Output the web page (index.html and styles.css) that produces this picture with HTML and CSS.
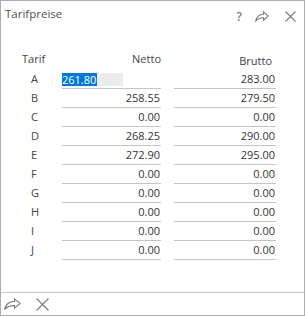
FILE: index.html
```html
<!DOCTYPE html>
<html lang="de">
<head>
  <meta charset="UTF-8">
  <title>Tarifpreise</title>
  <link rel="stylesheet" href="styles.css">
</head>
<body>
  <div class="dialog">
    <!-- Titelleiste -->
    <div class="titlebar">
      <span class="title">Tarifpreise</span>
      <div class="tools">
        <span class="help">?</span>
        <svg class="icon share" width="14" height="11" viewBox="0 0 14 11">
          <path d="M8.5 0.8 L13.2 5 L8.5 9.2 V6.8 C5.5 6.6 3 7.6 0.8 9.8 C1.6 5.6 4.2 3.4 8.5 3.2 Z" />
        </svg>
        <svg class="icon close" width="11" height="11" viewBox="0 0 11 11">
          <path d="M0.5 0.5 L10.5 10.5 M10.5 0.5 L0.5 10.5" />
        </svg>
      </div>
    </div>

    <!-- Tabelle -->
    <div class="content">
      <div class="grid" id="grid">
        <div class="head tarif">Tarif</div>
        <div class="head netto">Netto</div>
        <div></div>
        <div class="head brutto">Brutto</div>
      </div>
    </div>

    <!-- Fußleiste -->
    <div class="footer">
      <svg class="icon share" width="17" height="12" viewBox="0 0 17 12">
        <path d="M10.5 0.8 L16.2 5.5 L10.5 10.2 V7.6 C6.8 7.4 3.6 8.6 0.8 11.2 C1.8 6.2 5.2 3.6 10.5 3.4 Z" />
      </svg>
      <svg class="icon close" width="13" height="13" viewBox="0 0 13 13">
        <path d="M0.5 0.5 L12.5 12.5 M12.5 0.5 L0.5 12.5" />
      </svg>
    </div>
  </div>

  <script>
    // Tarifdaten
    const tarife = [
      { name: "A", netto: "261.80", brutto: "283.00", edit: true },
      { name: "B", netto: "258.55", brutto: "279.50" },
      { name: "C", netto: "0.00", brutto: "0.00" },
      { name: "D", netto: "268.25", brutto: "290.00" },
      { name: "E", netto: "272.90", brutto: "295.00" },
      { name: "F", netto: "0.00", brutto: "0.00" },
      { name: "G", netto: "0.00", brutto: "0.00" },
      { name: "H", netto: "0.00", brutto: "0.00" },
      { name: "I", netto: "0.00", brutto: "0.00" },
      { name: "J", netto: "0.00", brutto: "0.00" },
    ];

    const grid = document.getElementById("grid");

    tarife.forEach((t) => {
      const netto = t.edit
        ? `<div class="cell editing"><span class="edit-box"><span class="sel">${t.netto}</span></span></div>`
        : `<div class="cell">${t.netto}</div>`;
      grid.insertAdjacentHTML(
        "beforeend",
        `<div class="letter">${t.name}</div>${netto}<div></div><div class="cell">${t.brutto}</div>`
      );
    });
  </script>
</body>
</html>
```

FILE: styles.css
```css
html, body {
  margin: 0;
  padding: 0;
  background: #ffffff;
}

body {
  font-family: "Open Sans", "Noto Sans", sans-serif;
  font-size: 11px;
  color: #444;
}

.dialog {
  width: 305px;
  height: 316px;
  box-sizing: border-box;
  border: 1px solid #adadad;
  display: flex;
  flex-direction: column;
}

.titlebar {
  height: 29px;
  display: flex;
  align-items: flex-start;
  justify-content: space-between;
}

.title {
  font-size: 11.5px;
  line-height: 16px;
  padding: 5px 0 0 4px;
  color: #505050;
}

.tools {
  display: flex;
  align-items: center;
  padding: 10px 8px 0 0;
}

.help {
  font-size: 12px;
  font-weight: 600;
  line-height: 10px;
  color: #808080;
  margin-right: 13px;
}

.icon {
  display: block;
  fill: none;
  stroke: #7a7a7a;
  stroke-width: 1.1;
}

.tools .share {
  margin-right: 16px;
}

.content {
  flex: 1;
}

.grid {
  display: grid;
  grid-template-columns: 48px 99px 13px 102px;
  padding: 21px 0 0 13px;
}

.head {
  height: 19px;
  line-height: 16px;
}

.head.tarif {
  padding-left: 8px;
}

.head.netto {
  text-align: right;
}

.head.brutto {
  text-align: right;
  padding-right: 4px;
  line-height: 19px;
}

.letter {
  height: 19px;
  line-height: 17px;
  padding-left: 17px;
}

.cell {
  height: 18px;
  line-height: 17px;
  border-bottom: 1px solid #c4c4c4;
  text-align: right;
  padding-right: 1px;
  color: #333;
}

.cell.editing {
  text-align: left;
  padding: 0;
}

.edit-box {
  display: inline-block;
  width: 61px;
  height: 13px;
  margin-top: 3px;
  background: #ececec;
  line-height: 13px;
  vertical-align: top;
}

.sel {
  display: inline-block;
  background: #0078d7;
  color: #fff;
  padding: 0 1px 0 0;
}

.footer {
  height: 22px;
  border-top: 1px solid #c8c8c8;
  display: flex;
  align-items: center;
  padding-left: 3px;
  gap: 15px;
}
```
